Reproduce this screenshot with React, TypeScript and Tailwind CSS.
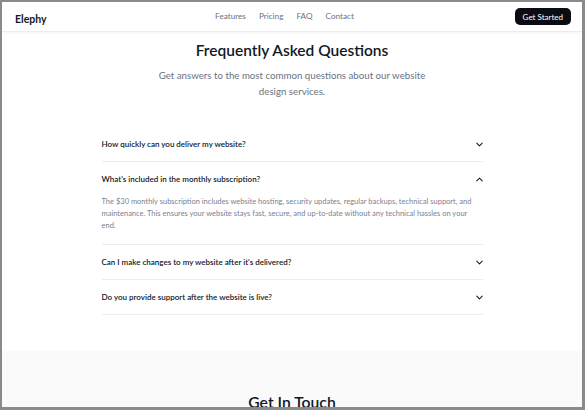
import { ChevronDown, ChevronUp } from "lucide-react"

const faqs = [
  { q: "How quickly can you deliver my website?", open: false },
  {
    q: "What's included in the monthly subscription?",
    a: "The $30 monthly subscription includes website hosting, security updates, regular backups, technical support, and maintenance. This ensures your website stays fast, secure, and up-to-date without any technical hassles on your end.",
    open: true,
  },
  { q: "Can I make changes to my website after it's delivered?", open: false },
  { q: "Do you provide support after the website is live?", open: false },
]

export default function App() {
  return (
    <div
      className="h-[410px] w-[585px] overflow-hidden border-t-2 border-l-2 border-r-[3px] border-b-[3px] border-[#8a8a8a] bg-white"
      style={{ fontFamily: 'Lato, "Open Sans", sans-serif' }}
    >
      {/* Navbar */}
      <header className="flex h-[30px] items-center border-b border-[#ececec] bg-white pl-[13px] pr-[11px] shadow-[0_1px_3px_rgba(0,0,0,0.05)]">
        <div className="flex-1">
          <span className="text-[10.5px] font-bold text-[#111827]">Elephy</span>
        </div>
        <nav className="mr-[17px] flex items-center gap-[13px] text-[8.2px] text-[#6b7280]">
          <a>Features</a>
          <a>Pricing</a>
          <a>FAQ</a>
          <a>Contact</a>
        </nav>
        <div className="flex flex-1 justify-end">
          <button className="h-[17px] rounded-[5px] bg-[#0b0b14] px-[8px] text-[8px] text-white">
            Get Started
          </button>
        </div>
      </header>

      {/* FAQ */}
      <section className="flex flex-col items-center pt-[6px]">
        <h2 className="text-[15.5px] font-semibold leading-[24px] text-[#111827]">
          Frequently Asked Questions
        </h2>
        <p className="mt-[5px] w-[268px] text-center text-[9.7px] leading-[16px] text-[#6b7280]">
          Get answers to the most common questions about our website design services.
        </p>

        <div className="mt-[28px] w-[381px]">
          {faqs.map((f) => (
            <div key={f.q} className="border-b border-[#ececec]">
              <div className="flex h-[34px] items-center justify-between">
                <span className="text-[8px] font-semibold text-[#111827]">{f.q}</span>
                {f.open ? (
                  <ChevronUp className="mr-[-2px] h-[11px] w-[11px] text-[#111827]" strokeWidth={2.2} />
                ) : (
                  <ChevronDown className="mr-[-2px] h-[11px] w-[11px] text-[#111827]" strokeWidth={2.2} />
                )}
              </div>
              {f.a && (
                <p className="pb-[12px] text-[7.5px] leading-[12px] text-[#7b8190]">{f.a}</p>
              )}
            </div>
          ))}
        </div>
      </section>

      {/* Contact */}
      <section className="mt-[36px] flex h-[100px] flex-col items-center bg-[#fafafa] pt-[39px]">
        <h2 className="text-[15.7px] font-semibold leading-[24px] text-[#111827]">Get In Touch</h2>
      </section>
    </div>
  )
}
